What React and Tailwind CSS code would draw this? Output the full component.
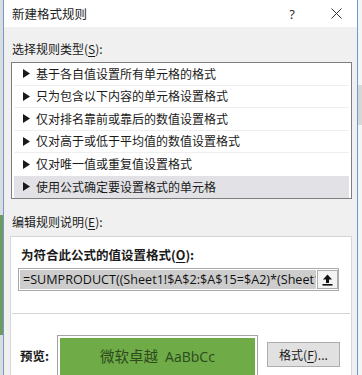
import React from "react";

function Tri() {
  return (
    <svg width="7" height="9" viewBox="0 0 7 9" className="shrink-0">
      <polygon points="0,0 7,4.5 0,9" fill="#1a1a1a" />
    </svg>
  );
}

function UploadIcon() {
  return (
    <svg width="11" height="12" viewBox="0 0 11 12">
      <polygon points="5.5,0.5 10,5.5 7,5.5 7,9 4,9 4,5.5 1,5.5" fill="#111" />
      <rect x="0.5" y="10" width="10" height="1.6" fill="#111" />
    </svg>
  );
}

export default function App() {
  const items = [
    "基于各自值设置所有单元格的格式",
    "只为包含以下内容的单元格设置格式",
    "仅对排名靠前或靠后的数值设置格式",
    "仅对高于或低于平均值的数值设置格式",
    "仅对唯一值或重复值设置格式",
    "使用公式确定要设置格式的单元格",
  ];
  return (
    <div className="w-[362px] h-[375px] overflow-hidden flex bg-[#f2f2f2] font-['Noto_Sans_CJK_SC','Noto_Sans',sans-serif] text-[12px] text-[#1a1a1a]">
      <div className="w-[3px] h-full flex flex-col">
        <div className="h-[215px] bg-[#dcdcdc]" />
        <div className="h-[120px] bg-[#6f9a5a]" />
        <div className="flex-1 bg-[#dcdcdc]" />
      </div>
      <div className="w-[355px] h-full border-x border-[#6a9bd6] flex flex-col bg-[#f0f0f0]">
        {/* title bar */}
        <div className="h-[27px] shrink-0 bg-white flex items-center pl-[8px] pr-[11px]">
          <div className="flex-1 leading-[16px] text-[12.5px] text-[#222]">新建格式规则</div>
          <div className="w-[20px] text-center leading-[16px] text-[13px] text-[#333] font-['Noto_Sans',sans-serif]">?</div>
          <div className="w-[24px]" />
          <div className="w-[20px] flex justify-center">
            <svg width="11" height="11" viewBox="0 0 11 11">
              <path d="M0.5 0.5 L10.5 10.5 M10.5 0.5 L0.5 10.5" stroke="#333" strokeWidth="1" />
            </svg>
          </div>
        </div>

        {/* body */}
        <div className="flex-1 flex flex-col pt-[14px] pl-[7px] min-h-0">
          <div className="h-[16px] leading-[16px] pl-[1px]">
            选择规则类型(<span className="underline underline-offset-2">S</span>):
          </div>
          <div className="mt-[5px] w-[341px] border border-[#7e7e7e] bg-white">
            {items.map((t, i) => (
              <div
                key={t}
                className={
                  "h-[22.5px] mx-[2px] flex items-center gap-[6px] pl-[9px] " +
                  (i === 5 ? "bg-[#e2e2e6]" : "") +
                  (i < 4 ? " border-b border-[#efefef]" : "")
                }
              >
                <Tri />
                <span className="leading-[16px]">{t}</span>
              </div>
            ))}
          </div>

          <div className="mt-[15px] h-[16px] leading-[16px] pl-[1px]">
            编辑规则说明(<span className="underline underline-offset-2">E</span>):
          </div>

          <div className="mt-[6px] ml-[-1px] w-[342px] flex-1 bg-white border border-b-0 border-[#d6d6d6] flex flex-col">
            <div className="pt-[10px] pl-[10px] h-[26px] leading-[16px] font-bold text-[12.5px]">
              为符合此公式的值设置格式(<span className="underline underline-offset-2">O</span>):
            </div>
            <div className="mt-[5px] ml-[7px] w-[321px] h-[23px] border border-[#a9a9a9] flex items-center bg-white">
              <div className="ml-[1px] w-[297px] h-[19px] bg-[#cdcdcd] overflow-hidden whitespace-nowrap flex items-center pl-[3px] font-['Open_Sans',sans-serif] text-[12.6px] text-[#111] leading-[19px]">
                =SUMPRODUCT((Sheet1!$A$2:$A$15=$A2)*(Sheet1!$B$2:$B$15=$B2))
              </div>
              <div className="ml-[1px] w-[21px] h-[19px] border border-[#adadad] bg-[#f3f3f3] flex items-center justify-center">
                <UploadIcon />
              </div>
            </div>

            <div className="mt-[22px] mx-[1px] h-px bg-[#d4d4d4]" />

            <div className="mt-[21px] flex items-start pl-[9px]">
              <div className="w-[37px] mt-[13px] h-[16px] leading-[16px] font-bold text-[12.5px]">预览:</div>
              <div className="w-[201px] border border-[#a3a3a3] p-[2px] bg-white">
                <div className="h-[40px] bg-[#6fac47] flex items-start justify-center pt-[10px]">
                  <span className="text-[14.5px] leading-[16px] text-[#2c4a1d]">
                    微软卓越
                    <span className="ml-[7px] font-['Open_Sans',sans-serif] text-[14px]">AaBbCc</span>
                  </span>
                </div>
              </div>
              <div className="ml-[9px] mt-[7px] w-[73px] h-[25px] border border-[#adadad] bg-[#e1e1e1] flex items-center justify-center leading-[16px]">
                格式(<span className="underline underline-offset-2">F</span>)...
              </div>
            </div>
          </div>
        </div>
      </div>
      <div className="flex-1 h-full flex flex-col bg-[#f4f4f4]">
        <div className="h-[85px]" />
        <div className="h-[40px] bg-[#d8d8d8]" />
      </div>
    </div>
  );
}
